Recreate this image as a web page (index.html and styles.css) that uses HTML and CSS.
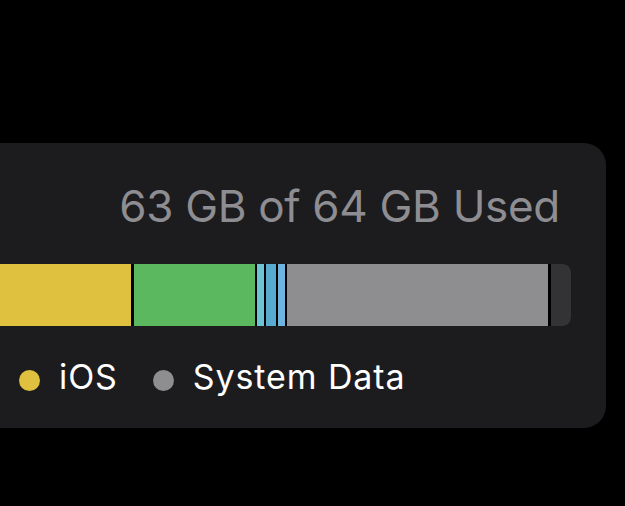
FILE: index.html
```html
<!DOCTYPE html>
<html lang="en">
<head>
<meta charset="utf-8">
<title>Storage</title>
<link rel="stylesheet" href="styles.css">
</head>
<body>
<section class="card">
  <div class="used">63 GB of 64 GB Used</div>
  <div class="bar">
    <span class="seg ios"></span>
    <span class="seg apps"></span>
    <span class="seg teal"></span>
    <span class="seg blue"></span>
    <span class="seg lblue"></span>
    <span class="seg system"></span>
    <span class="seg free"></span>
  </div>
  <ul class="legend">
    <li class="item"><span class="dot dot-ios"></span>iOS</li>
    <li class="item"><span class="dot dot-system"></span>System Data</li>
  </ul>
</section>
</body>
</html>
```

FILE: styles.css
```css
html, body {
  margin: 0;
  padding: 0;
  background: #000;
  width: 625px;
  height: 506px;
  overflow: hidden;
}

body {
  font-family: Inter, "Liberation Sans", sans-serif;
}

.card {
  box-sizing: border-box;
  width: 666px;
  height: 285px;
  margin-top: 143px;
  margin-left: -60px;
  padding: 37px 35px 0 30px;
  background: #1c1c1e;
  border-radius: 22px;
}

.used {
  font-size: 44px;
  line-height: 52px;
  color: #8d8d92;
  text-align: right;
  padding-right: 11px;
  letter-spacing: -0.3px;
}

.bar {
  display: flex;
  height: 62px;
  margin-top: 32px;
  background: #000;
  border-radius: 8px;
  overflow: hidden;
}

.seg {
  display: block;
  height: 100%;
  flex: none;
}

.ios { width: 161px; background: #dfc13f; margin-right: 3px; }
.apps { width: 121px; background: #5cb85e; margin-right: 2px; }
.teal { width: 7px; background: #6cc4d6; margin-right: 2px; }
.blue { width: 10px; background: #58abce; margin-right: 2px; }
.lblue { width: 7px; background: #6db4de; margin-right: 2px; }
.system { width: 261px; background: #8e8e91; margin-right: 3px; }
.free { flex: 1; background: #333335; }

.legend {
  display: flex;
  list-style: none;
  margin: 31px 0 0;
  padding: 0 0 0 49px;
  gap: 35px;
}

.item {
  display: flex;
  align-items: center;
  gap: 19px;
  font-size: 34px;
  line-height: 40px;
  color: #fff;
  letter-spacing: 0.9px;
}

.dot {
  display: block;
  width: 21px;
  height: 21px;
  border-radius: 50%;
  flex: none;
  margin-top: 6px;
}

.dot-ios { background: #dfc13f; }
.dot-system { background: #8e8e91; }
```
